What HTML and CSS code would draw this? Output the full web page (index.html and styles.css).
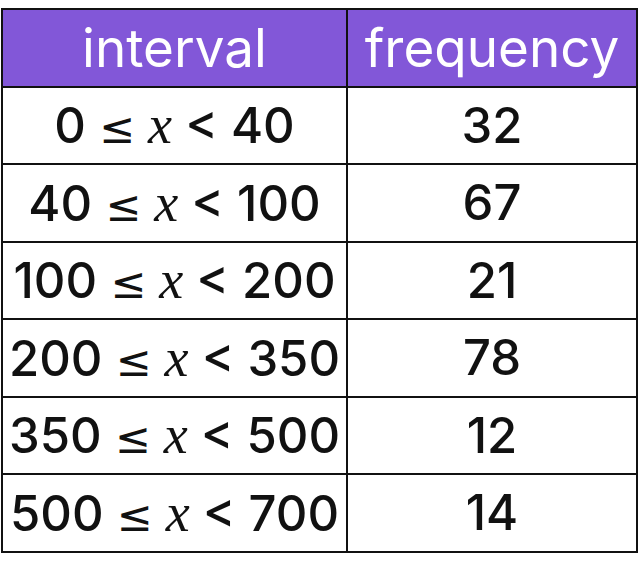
FILE: index.html
```html
<!DOCTYPE html>
<html>
<head>
<meta charset="utf-8">
<link rel="stylesheet" href="styles.css">
</head>
<body>
<table class="freq">
  <thead>
    <tr><th class="c1">interval</th><th class="c2">frequency</th></tr>
  </thead>
  <tbody>
    <tr><td>0 <span class="le">≤</span> <span class="x">x</span> &lt; 40</td><td>32</td></tr>
    <tr><td>40 <span class="le">≤</span> <span class="x">x</span> &lt; 100</td><td>67</td></tr>
    <tr><td>100 <span class="le">≤</span> <span class="x">x</span> &lt; 200</td><td>21</td></tr>
    <tr><td>200 <span class="le">≤</span> <span class="x">x</span> &lt; 350</td><td>78</td></tr>
    <tr><td>350 <span class="le">≤</span> <span class="x">x</span> &lt; 500</td><td>12</td></tr>
    <tr><td>500 <span class="le">≤</span> <span class="x">x</span> &lt; 700</td><td>14</td></tr>
  </tbody>
</table>
</body>
</html>
```
FILE: styles.css
```css
html, body { margin: 0; padding: 0; background: #fff; }
body { padding: 8px 0 0 1px; }
.freq {
  border-collapse: collapse;
  width: 637px;
  table-layout: fixed;
  font-family: Inter, "Noto Sans", sans-serif;
  border: 2px solid #111;
}
.freq th, .freq td {
  border: 2px solid #111;
  text-align: center;
  padding: 0;
  height: 75.5px;
  white-space: nowrap;
}
.freq th {
  background: #8257d8;
  color: #fff;
  font-weight: 400;
  font-size: 53px;
}
.freq td {
  color: #111;
  font-weight: 500;
  font-size: 49px;
}
.c1 { width: 343px; }
.le {
  font-family: "DejaVu Sans", sans-serif;
  font-weight: 400;
  font-size: 43px;
}
.x {
  font-family: "Liberation Serif", serif;
  font-style: italic;
  font-weight: 400;
  font-size: 54px;
}
```
